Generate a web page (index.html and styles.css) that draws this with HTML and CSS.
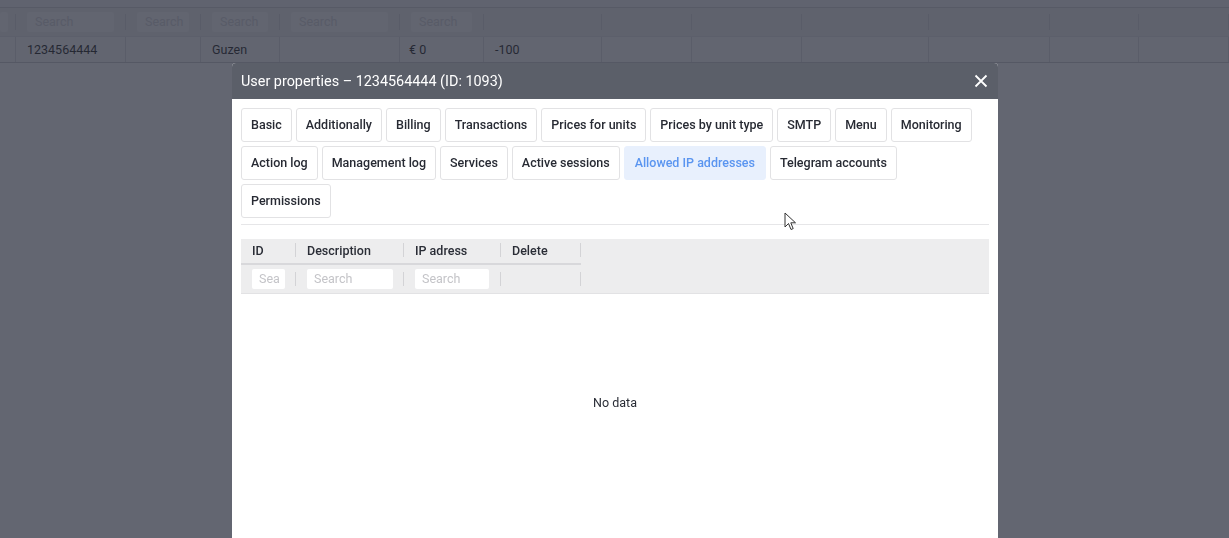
FILE: index.html
```html
<!DOCTYPE html>
<html lang="en">

<head>
    <meta charset="UTF-8">
    <title>Users</title>
    <link rel="stylesheet" href="styles.css">
</head>

<body>
    <div class="page">
        <div class="bg-row bg-head">
            <div class="c c1"></div><div class="c c2"></div><div class="c c3"></div><div class="c c4"></div>
            <div class="c c5"></div><div class="c c6"></div><div class="c c7"></div><div class="c c8"></div>
            <div class="c c9"></div><div class="c c10"></div><div class="c c11"></div><div class="c c12"></div>
            <div class="c c13"></div>
        </div>
        <div class="bg-row bg-filter">
            <div class="c c1"><span class="bg-input"></span></div>
            <div class="c c2"><span class="bg-input">Search</span></div>
            <div class="c c3"><span class="bg-input">Search</span></div>
            <div class="c c4"><span class="bg-input">Search</span></div>
            <div class="c c5"><span class="bg-input">Search</span></div>
            <div class="c c6"><span class="bg-input">Search</span></div>
            <div class="c c7"></div><div class="c c8"></div><div class="c c9"></div><div class="c c10"></div>
            <div class="c c11"></div><div class="c c12"></div><div class="c c13"></div>
        </div>
        <div class="bg-row bg-data">
            <div class="c c1"></div>
            <div class="c c2">1234564444</div>
            <div class="c c3"></div>
            <div class="c c4">Guzen</div>
            <div class="c c5"></div>
            <div class="c c6 euro">€ 0</div>
            <div class="c c7">-100</div>
            <div class="c c8"></div><div class="c c9"></div><div class="c c10"></div>
            <div class="c c11"></div><div class="c c12"></div><div class="c c13"></div>
        </div>
    </div>

    <div class="overlay"></div>

    <div class="modal">
        <div class="modal-head">
            <span class="modal-title">User properties – 1234564444 (ID: 1093)</span>
            <span class="modal-close">
                <svg width="14" height="14" viewBox="0 0 14 14">
                    <path d="M1.5 1.5 L12.5 12.5 M12.5 1.5 L1.5 12.5" stroke="#fff" stroke-width="1.8" fill="none" />
                </svg>
            </span>
        </div>
        <div class="modal-body">
            <div class="tabs">
                <div class="tab">Basic</div>
                <div class="tab">Additionally</div>
                <div class="tab">Billing</div>
                <div class="tab">Transactions</div>
                <div class="tab">Prices for units</div>
                <div class="tab">Prices by unit type</div>
                <div class="tab">SMTP</div>
                <div class="tab">Menu</div>
                <div class="tab">Monitoring</div>
                <div class="tab">Action log</div>
                <div class="tab">Management log</div>
                <div class="tab">Services</div>
                <div class="tab">Active sessions</div>
                <div class="tab active">Allowed IP addresses</div>
                <div class="tab">Telegram accounts</div>
                <div class="tab">Permissions</div>
            </div>
            <div class="divider"></div>
            <div class="ip-table">
                <div class="ip-head">
                    <div class="ip-cell col-id">ID</div>
                    <div class="ip-cell col-desc">Description</div>
                    <div class="ip-cell col-ip">IP adress</div>
                    <div class="ip-cell col-del">Delete</div>
                </div>
                <div class="ip-filter">
                    <div class="ip-cell col-id"><span class="ip-input w-id">Sea</span></div>
                    <div class="ip-cell col-desc"><span class="ip-input w-desc">Search</span></div>
                    <div class="ip-cell col-ip"><span class="ip-input w-ip">Search</span></div>
                    <div class="ip-cell col-del"></div>
                </div>
            </div>
            <div class="empty">No data</div>
        </div>
    </div>

    <svg class="cursor" width="13" height="20" viewBox="0 0 13 20">
        <path d="M1 1 L1 15 L4.5 11.5 L7 17.5 L9.2 16.6 L6.8 10.8 L11.5 10.8 Z" fill="#fff" stroke="#333" stroke-width="1" stroke-linejoin="round" />
    </svg>
</body>

</html>
```

FILE: styles.css
```css
body {
    margin: 0;
    height: 538px;
    overflow: hidden;
    background: #fff;
    font-family: Roboto, 'Noto Sans', sans-serif;
    font-size: 12.5px;
    color: #222;
}

/* page behind the dialog */
.page {
    width: 1229px;
}

.bg-row {
    display: flex;
    align-items: center;
}

.c {
    box-sizing: border-box;
    flex: none;
    display: flex;
    align-items: center;
}

.c1 { width: 16px; }
.c2 { width: 110px; }
.c3 { width: 75px; }
.c4 { width: 79px; }
.c5 { width: 120px; }
.c6 { width: 84px; }
.c7 { width: 118px; }
.c8 { width: 90px; }
.c9 { width: 110px; }
.c10 { width: 127px; }
.c11 { width: 121px; }
.c12 { width: 89px; }
.c13 { width: 90px; }

.bg-head {
    height: 7px;
    border-bottom: 1px solid #cfd0d4;
    background: #f4f4f5;
}

.bg-filter {
    height: 28px;
    background: #eeeef0;
    border-bottom: 1px solid #e4e4e6;
}

.bg-filter .c {
    border-right: 1px solid #d8d8dc;
    height: 16px;
}

.bg-input {
    display: block;
    flex: 1;
    height: 20px;
    margin: 0 11px;
    background: #fafafa;
    border-radius: 2px;
    line-height: 20px;
    padding-left: 8px;
    color: #d4d4d8;
    overflow: hidden;
    white-space: nowrap;
}

.bg-filter .c1 .bg-input {
    margin: 0 12px 0 0;
}

.bg-data {
    height: 25px;
    background: #fbfbfc;
    border-bottom: 1px solid #c9cace;
}

.bg-data .c {
    height: 100%;
    border-right: 1px solid #dadbde;
    padding-left: 11px;
    color: #111;
}

.bg-data .euro {
    padding-left: 9px;
}

.overlay {
    position: fixed;
    inset: 0;
    background: rgba(44, 49, 63, 0.74);
}

/* dialog */
.modal {
    position: absolute;
    top: 63px;
    left: 232px;
    width: 766px;
    height: 620px;
    background: #fff;
    border-radius: 4px 4px 0 0;
    overflow: hidden;
}

.modal-head {
    height: 36px;
    background: #5b5f69;
    display: flex;
    align-items: center;
    justify-content: space-between;
    padding: 0 10px 0 9px;
}

.modal-title {
    color: #fff;
    font-size: 14.4px;
}

.modal-close {
    display: flex;
    width: 14px;
    height: 14px;
}

.modal-body {
    padding: 9px 9px 0 9px;
}

.tabs {
    display: flex;
    flex-wrap: wrap;
    gap: 4px;
    padding-right: 6px;
}

.tab {
    height: 34px;
    box-sizing: border-box;
    padding: 0 9px 2px;
    border: 1px solid #e2e2e4;
    border-radius: 3px;
    display: flex;
    align-items: center;
    font-weight: 500;
    color: #272a33;
    white-space: nowrap;
}

.tab.active {
    background: #e8f0fd;
    border-color: #e8f0fd;
    color: #5a95f0;
    padding: 0 10px 2px;
}

.divider {
    height: 1px;
    background: #e6e6e8;
    margin: 6px 0 14px;
}

.ip-table {
    background: #ededee;
    border-bottom: 1px solid #e2e2e4;
}

.ip-head {
    display: inline-flex;
    padding: 4px 0 6px;
    border-bottom: 2px solid #d8d8db;
}

.ip-filter {
    display: flex;
    padding: 4px 0;
}

.ip-cell {
    box-sizing: border-box;
    height: 14px;
    border-right: 1px solid #d3d3d6;
    padding-left: 11px;
    display: flex;
    align-items: center;
}

.ip-head .ip-cell {
    font-weight: 500;
    color: #2a2d36;
}

.ip-filter .ip-cell {
    height: 20px;
    border-right: none;
    position: relative;
}

.ip-filter .ip-cell::after {
    content: "";
    position: absolute;
    right: 0;
    top: 3px;
    height: 14px;
    border-right: 1px solid #d3d3d6;
}

.col-id { width: 55px; }
.col-desc { width: 108px; }
.col-ip { width: 97px; }
.col-del { width: 80px; }

.ip-input {
    display: block;
    height: 20px;
    box-sizing: border-box;
    background: #fff;
    border-radius: 2px;
    padding-left: 7px;
    line-height: 20px;
    color: #c4c4c8;
    overflow: hidden;
    white-space: nowrap;
}

.w-id { width: 33px; }
.w-desc { width: 86px; }
.w-ip { width: 74px; }

.empty {
    text-align: center;
    margin-top: 101px;
    color: #2a2d36;
}

.cursor {
    position: absolute;
    left: 784px;
    top: 212px;
}
```
